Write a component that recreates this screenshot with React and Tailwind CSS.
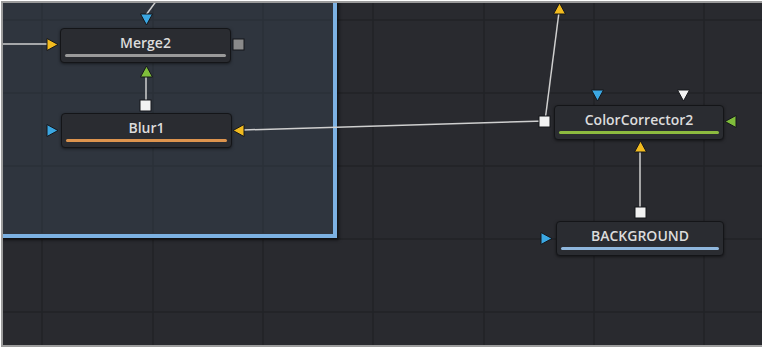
import React from "react";

function Node({ left, top, width, label, bar }) {
  return (
    <div
      className="absolute h-[35px] rounded-[4px] border border-[#141518] bg-[#2a2c31] shadow-[0_1px_3px_rgba(0,0,0,0.5)] flex flex-col"
      style={{ left, top, width }}
    >
      <div className="pt-[5px] text-center text-[14px] leading-[18px] font-semibold text-[#dcdcdc] font-['Open_Sans',sans-serif]">
        {label}
      </div>
      <div className={`mt-[2px] mx-[4px] h-[3px] rounded-full ${bar}`} />
    </div>
  );
}

function Tri({ x, y, dir, color }) {
  // x,y = top-left of 13x13 box
  let pts;
  if (dir === "right") pts = "1,0.5 12,6.5 1,12.5";
  else if (dir === "left") pts = "12,0.5 1,6.5 12,12.5";
  else if (dir === "down") pts = "0.5,1 12.5,1 6.5,12";
  else pts = "6.5,1 12.5,12 0.5,12";
  return (
    <polygon
      points={pts}
      transform={`translate(${x} ${y})`}
      fill={color}
      stroke="#15161a"
      strokeWidth="1"
      strokeLinejoin="round"
    />
  );
}

function Sq({ x, y, color }) {
  return <rect x={x} y={y} width="11" height="11" fill={color} stroke="#15161a" strokeWidth="1" />;
}

export default function App() {
  const vx = [39, 150, 260, 370, 481, 591, 701];
  const hy = [17, 90, 163, 236, 309];
  const yellow = "#f2bb1f";
  const blue = "#3ba7e2";
  const green = "#7fbd3b";
  const white = "#f2f2f2";
  const line = "#cfcfcf";
  return (
    <div className="w-[762px] h-[347px] bg-white pt-px pl-px">
      <div className="relative w-full h-full overflow-hidden border-t-2 border-l-2 border-b-2 border-[#9c9c9c] bg-[#292a2f]">
        <svg className="absolute inset-0" width="762" height="347">
          {vx.map((x) => (
            <line key={"v" + x} x1={x} y1="0" x2={x} y2="347" stroke="#222327" strokeWidth="1.5" />
          ))}
          {hy.map((y) => (
            <line key={"h" + y} x1="0" y1={y} x2="762" y2={y} stroke="#222327" strokeWidth="1.5" />
          ))}
        </svg>
        {/* group box */}
        <div className="absolute left-[-10px] top-[-10px] w-[344px] h-[245px] bg-[#2f353e] border-r-[4px] border-b-[4px] border-[#7cb1e2] shadow-[2px_2px_3px_rgba(0,0,0,0.6)]" />
        <svg className="absolute inset-0" width="762" height="347">
          {vx.slice(0, 3).map((x) => (
            <line key={"gv" + x} x1={x} y1="0" x2={x} y2="230" stroke="#2b3038" strokeWidth="1.5" />
          ))}
          {hy.slice(0, 3).map((y) => (
            <line key={"gh" + y} x1="0" y1={y} x2="328" y2={y} stroke="#2b3038" strokeWidth="1.5" />
          ))}
        </svg>
        <Node left={57} top={25} width={171} label="Merge2" bar="bg-[#9a9a9a]" />
        <Node left={58} top={110} width={171} label="Blur1" bar="bg-[#dd944e]" />
        <Node left={551} top={102} width={170} label="ColorCorrector2" bar="bg-[#8cba3f]" />
        <Node left={553} top={218} width={168} label="BACKGROUND" bar="bg-[#8fb7dd]" />
        <svg className="absolute inset-0" width="762" height="347">
          <line x1="0" y1="41" x2="44" y2="41" stroke={line} strokeWidth="1.5" />
          <line x1="143" y1="12" x2="154" y2="-3" stroke={line} strokeWidth="1.5" />
          <line x1="143" y1="73" x2="143" y2="97" stroke={line} strokeWidth="1.5" />
          <line x1="542" y1="118" x2="240" y2="127" stroke={line} strokeWidth="1.5" />
          <line x1="542" y1="118" x2="556" y2="9" stroke={line} strokeWidth="1.5" />
          <line x1="637" y1="148" x2="637" y2="205" stroke={line} strokeWidth="1.5" />

          <Tri x={43} y={35} dir="right" color={yellow} />
          <Tri x={137} y={10} dir="down" color={blue} />
          <Sq x={230} y={36} color="#8a8a8a" />
          <Tri x={137} y={62} dir="up" color={green} />

          <Sq x={137} y={97} color={white} />
          <Tri x={43} y={121} dir="right" color={blue} />
          <Tri x={229} y={121} dir="left" color={yellow} />

          <Tri x={550} y={-1} dir="up" color={yellow} />
          <Tri x={588} y={86} dir="down" color={blue} />
          <Tri x={674} y={86} dir="down" color={white} />
          <Tri x={721} y={112} dir="left" color={green} />
          <Sq x={536} y={113} color={white} />
          <Tri x={631} y={137} dir="up" color={yellow} />

          <Sq x={632} y={204} color={white} />
          <Tri x={537} y={229} dir="right" color={blue} />
        </svg>
      </div>
    </div>
  );
}
